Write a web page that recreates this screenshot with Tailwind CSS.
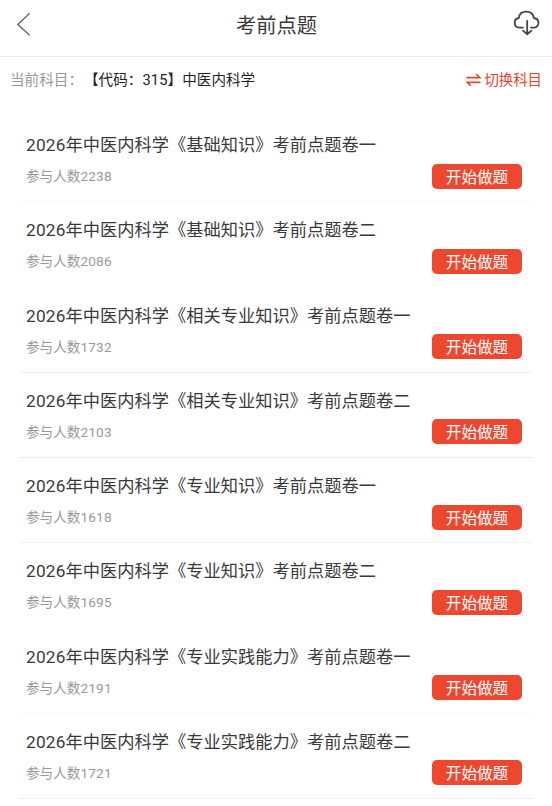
<!DOCTYPE html>
<html lang="zh-CN">
<head>
  <meta charset="UTF-8" />
  <meta name="viewport" content="width=device-width, initial-scale=1.0" />
  <title>考前点题</title>
  <script src="https://cdn.jsdelivr.net/npm/@tailwindcss/browser@4"></script>
</head>
<body class="bg-white h-[806px] overflow-hidden font-[Roboto,'Noto_Sans_CJK_SC',sans-serif] text-[#3a3a3a]">
  <header class="h-[57px] flex items-start justify-between border-b border-[#ebebeb] pl-4 pr-3">
    <svg class="w-[16px] h-[26px] mt-3" viewBox="0 0 16 26" fill="none" stroke="#666" stroke-width="1.4"><path d="M13.7 1.3 1.8 12.6 13.7 23.2" /></svg>
    <h1 class="text-[20.3px] leading-[52px] pl-[9px]">考前点题</h1>
    <svg class="w-7 h-7 mt-[9px]" viewBox="0 0 28 28" fill="none" stroke="#444" stroke-width="1.8" stroke-linecap="round" stroke-linejoin="round">
      <path d="M11 18.6H7.5C4.5 18.6 2.7 16.6 2.7 13.8 2.7 11.2 4.2 9.4 6.8 9 7.2 5 10 2.6 14.2 2.6s7.1 2.4 7.5 6.4c2.6.4 4.8 2.2 4.8 4.8 0 2.8-2.2 4.8-5.2 4.8H19" />
      <path d="M15.2 12v13M11 21.6l4.2 3.6 4.2-3.6" />
    </svg>
  </header>

  <div class="h-[60px] flex items-start justify-between pl-[11px] pr-[10px] text-[14.6px] leading-[46px]">
    <div class="flex">
      <span class="text-[#999] w-[73px] -ml-px mr-px whitespace-nowrap">当前科目：</span>
      <span class="text-[#222]">【代码：<span class="tracking-[0.2px]">315</span>】中医内科学</span>
    </div>
    <a class="flex pt-px text-[14.4px] text-[#e5432f]">
      <svg class="w-[15px] h-[14px] mt-[15px] mr-[3px]" viewBox="0 0 15 14" fill="none" stroke="#e5432f" stroke-width="1.6"><path d="M.5 4.6h13.2L10.3 1.2M14.5 9.4H1.3l3.4 3.4" /></svg>
      切换科目
    </a>
  </div>

  <main id="list" class="px-[19px]"></main>

  <script>
    const papers = [
      { name: '《基础知识》考前点题卷一', count: 2238, line: 'border-[#f7f7f7]' },
      { name: '《基础知识》考前点题卷二', count: 2086, line: 'border-transparent' },
      { name: '《相关专业知识》考前点题卷一', count: 1732, line: 'border-[#f1f1f1]' },
      { name: '《相关专业知识》考前点题卷二', count: 2103, line: 'border-[#ebebeb]' },
      { name: '《专业知识》考前点题卷一', count: 1618, line: 'border-[#f1f1f1]' },
      { name: '《专业知识》考前点题卷二', count: 1695, line: 'border-transparent' },
      { name: '《专业实践能力》考前点题卷一', count: 2191, line: 'border-[#f7f7f7]' },
      { name: '《专业实践能力》考前点题卷二', count: 1721, line: 'border-[#efefef]' },
    ];

    document.getElementById('list').innerHTML = papers.map(p => `
      <div class="h-[85.25px] flex justify-between border-b pl-[7px] pr-[11px] ${p.line}">
        <div class="whitespace-nowrap w-0">
          <h2 class="text-[17.25px] leading-6 mt-4"><span class="tracking-[0.2px]">2026</span>年中医内科学${p.name}</h2>
          <p class="text-[13.6px] leading-5 mt-[9px] text-[#999]">参与人数<span class="tracking-[0.2px]">${p.count}</span></p>
        </div>
        <button class="w-[90px] h-[25px] mt-[46.7px] rounded-[5px] bg-[#ee4730] text-white text-[15.6px] leading-[25px] pt-[2px]">开始做题</button>
      </div>`).join('');
  </script>
</body>
</html>
